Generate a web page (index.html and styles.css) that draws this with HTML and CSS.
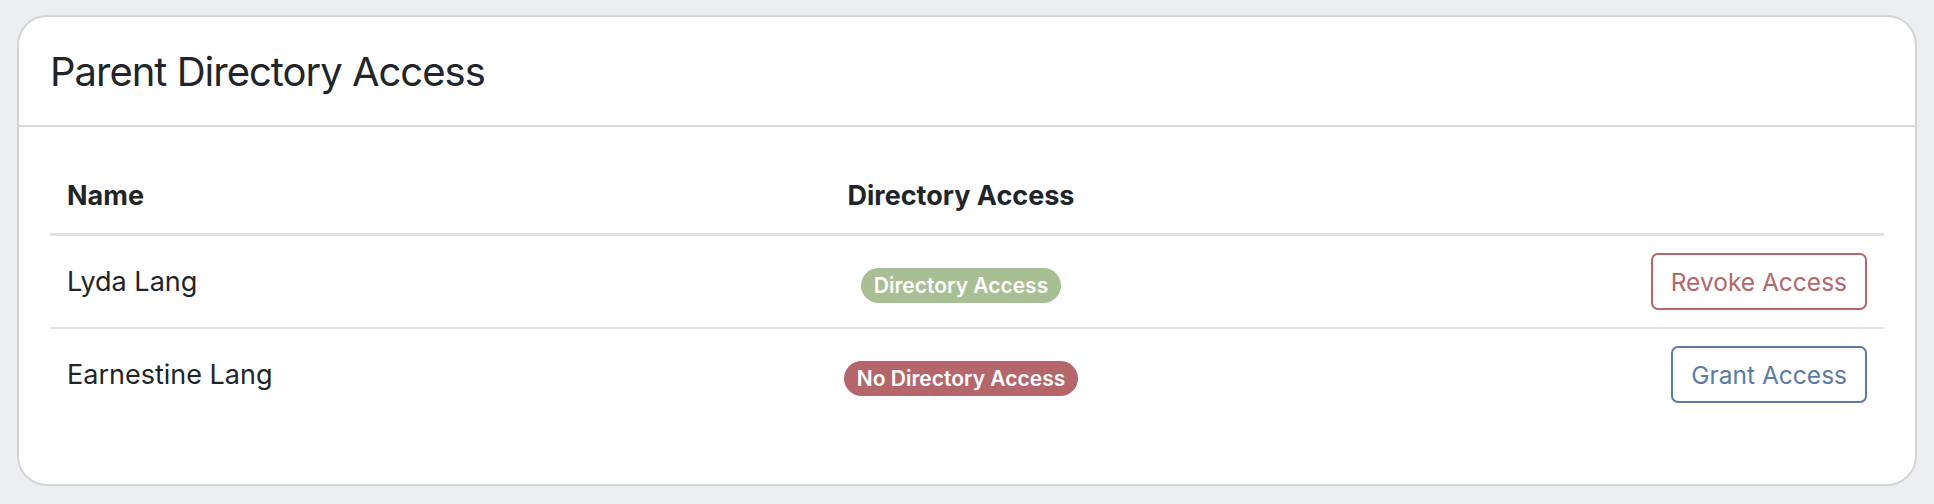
FILE: index.html
```html
<!DOCTYPE html>
<html lang="en">
<head>
<meta charset="utf-8">
<title>Parent Directory Access</title>
<link rel="stylesheet" href="styles.css">
</head>
<body>
  <div class="card">
    <div class="card-header">
      <h4 class="card-title">Parent Directory Access</h4>
    </div>
    <div class="card-body">
      <table class="table">
        <colgroup>
          <col class="col-name">
          <col class="col-access">
          <col>
        </colgroup>
        <thead>
          <tr>
            <th>Name</th>
            <th class="center">Directory Access</th>
            <th></th>
          </tr>
        </thead>
        <tbody>
          <tr>
            <td>Lyda Lang</td>
            <td class="center"><span class="badge badge-success">Directory Access</span></td>
            <td class="right"><button class="btn btn-outline-danger">Revoke Access</button></td>
          </tr>
          <tr class="last">
            <td>Earnestine Lang</td>
            <td class="center"><span class="badge badge-danger">No Directory Access</span></td>
            <td class="right"><button class="btn btn-outline-primary">Grant Access</button></td>
          </tr>
        </tbody>
      </table>
    </div>
  </div>
</body>
</html>
```

FILE: styles.css
```css
* {
  box-sizing: border-box;
}

html, body {
  margin: 0;
  padding: 0;
}

body {
  background: #eceef2;
  font-family: Inter, "Noto Sans", "Liberation Sans", sans-serif;
  color: #212529;
  padding: 15px 17px 0 17px;
}

.card {
  background: #ffffff;
  border: 2px solid #d3d4d6;
  border-radius: 30px;
  width: 1900px;
}

.card-header {
  padding: 31px 31px 29px 31px;
  border-bottom: 2px solid #d8d9db;
}

.card-title {
  margin: 0;
  font-size: 40px;
  font-weight: 400;
  line-height: 48px;
  letter-spacing: -1px;
  color: #212529;
}

.card-body {
  padding: 31px;
}

.table {
  width: 100%;
  border-collapse: collapse;
  table-layout: fixed;
  margin-bottom: 33px;
  font-size: 27px;
}

.col-name {
  width: 777px;
}

.col-access {
  width: 268px;
}

.table th {
  font-weight: 700;
  text-align: left;
  line-height: 34px;
  padding: 21px 17px 20px 17px;
  border-bottom: 3px solid #dee2e6;
}

.table td {
  padding: 17px;
  line-height: 40px;
  vertical-align: middle;
  border-bottom: 2px solid #e1e4e7;
}

.table tr.last td {
  border-bottom: none;
}

.table .center {
  text-align: center;
  padding-left: 0;
  padding-right: 0;
}

.table .right {
  text-align: right;
}

.badge {
  display: inline-block;
  white-space: nowrap;
  font-size: 21px;
  font-weight: 600;
  line-height: 1;
  padding: 7px 13px;
  border-radius: 999px;
  color: #ffffff;
  position: relative;
  top: 2px;
}

.badge-success {
  background: #a8be93;
}

.badge-danger {
  background: #b5666b;
}

.btn {
  display: inline-block;
  white-space: nowrap;
  font-family: inherit;
  font-size: 24.5px;
  font-weight: 400;
  line-height: 36px;
  padding: 8.5px 18px;
  border-radius: 7px;
  background: #ffffff;
  border: 2px solid;
  vertical-align: middle;
  cursor: pointer;
}

.btn-outline-danger {
  color: #b5666b;
  border-color: #b5666b;
}

.btn-outline-primary {
  color: #5b7aa8;
  border-color: #5b7aa8;
}
```
